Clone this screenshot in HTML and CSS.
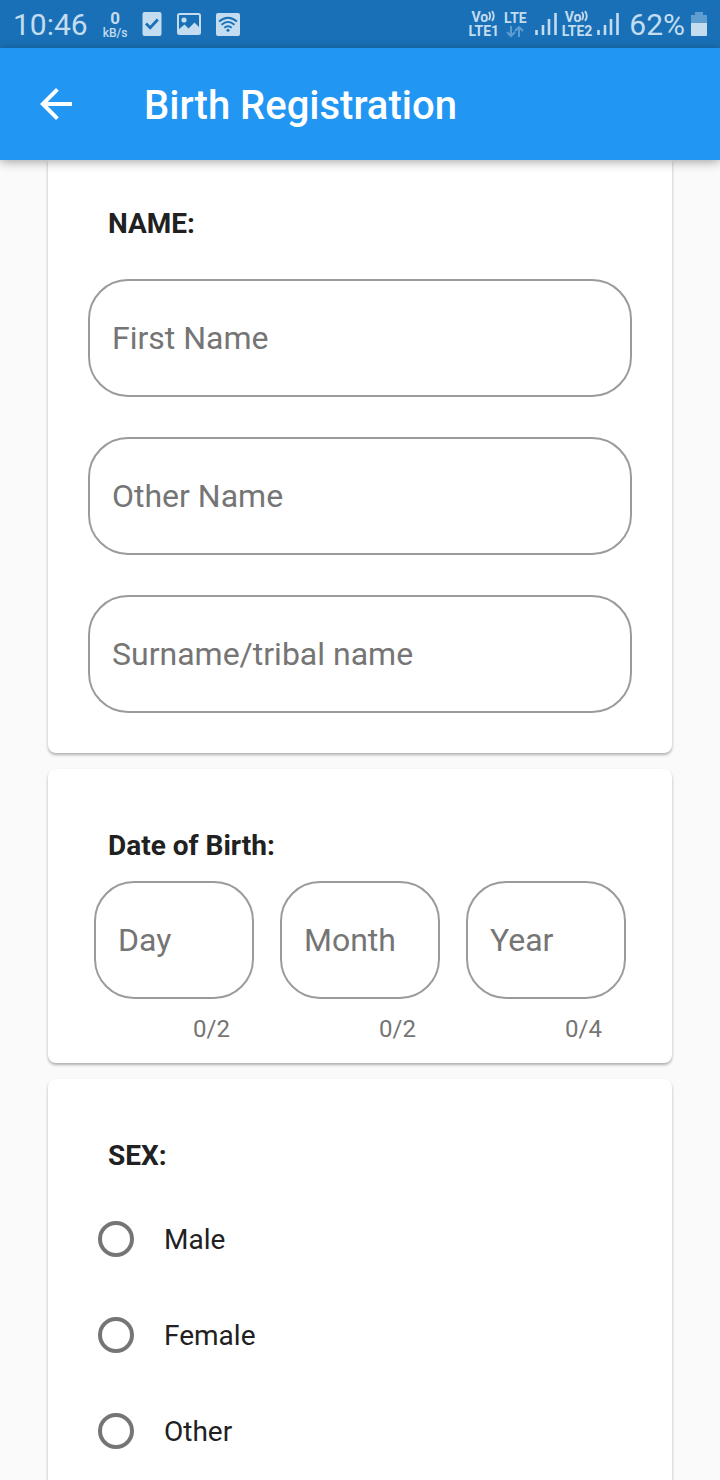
FILE: index.html
```
<!DOCTYPE html>
<html lang="en">
<head>
<meta charset="utf-8">
<meta name="viewport" content="width=device-width, initial-scale=1">
<title>Birth Registration</title>
<link rel="stylesheet" href="styles.css">
</head>
<body>
<div class="app">
  <div class="status">
    <div class="status-group status-left">
      <span class="clock">10:46</span>
      <span class="stack rate"><span class="rate-value">0</span><span class="rate-unit">kB/s</span></span>
      <svg class="notice" width="20" height="24" viewBox="0 0 20 24" aria-hidden="true">
        <rect x="0.5" y="0" width="19" height="24" rx="2" fill="currentColor"/>
        <path d="M4 11.500l4.200 4.200 7.600-8.200" fill="none" stroke="#1970b6" stroke-width="2.800"/>
      </svg>
      <svg class="notice" width="24" height="24" viewBox="0 0 24 24" aria-hidden="true">
        <rect x="1" y="2" width="22" height="20" rx="1.5" fill="none" stroke="currentColor" stroke-width="2"/>
        <circle cx="7" cy="8" r="2.6" fill="currentColor"/>
        <path d="M1 18l6.500-5.500 4 4 6-6L23 16v6H1z" fill="currentColor"/>
      </svg>
      <svg class="notice" width="24" height="24" viewBox="0 0 24 24" aria-hidden="true">
        <rect width="24" height="23" y="1" rx="2" fill="currentColor"/>
        <g fill="none" stroke="#1970b6" stroke-width="1.8">
          <path d="M3 9.500q9-7.500 18 0"/>
          <path d="M5.500 12.700q6.500-5.600 13 0"/>
          <path d="M8.300 15.700q3.700-3 7.400 0"/>
        </g>
        <circle cx="12" cy="18.300" r="1.500" fill="#1970b6"/>
      </svg>
    </div>
    <div class="status-group status-right">
      <div class="status-group sim">
        <span class="stack">
          <span class="volte">Vo<svg width="8" height="12" viewBox="0 0 9 12" aria-hidden="true"><path d="M1 1.500q3 4.500 0 9M4.500 0.500q4 5.500 0 11" fill="none" stroke="currentColor" stroke-width="2"/></svg></span>
          <span>LTE1</span>
        </span>
        <span class="stack"><span>LTE</span>
          <svg width="18" height="12" viewBox="0 0 18 12" aria-hidden="true" class="arrows">
            <path d="M5 0v10M1 6l4 4 4-4M13 11V1M9 5l4-4 4 4" fill="none" stroke="currentColor" stroke-width="2"/>
          </svg>
        </span>
      </div>
      <div class="status-group sim">
        <svg width="22" height="24" viewBox="0 0 22 24" aria-hidden="true">
          <path d="M1.500 18v5M8 13v10M14 7v16M20.500 1v22" stroke="currentColor" stroke-width="2.600"/>
        </svg>
        <span class="stack">
          <span class="volte">Vo<svg width="8" height="12" viewBox="0 0 9 12" aria-hidden="true"><path d="M1 1.500q3 4.500 0 9M4.500 0.500q4 5.500 0 11" fill="none" stroke="currentColor" stroke-width="2"/></svg></span>
          <span>LTE2</span>
        </span>
        <svg width="22" height="24" viewBox="0 0 22 24" aria-hidden="true">
          <path d="M1.500 18v5M8 13v10M14 7v16M20.500 1v22" stroke="currentColor" stroke-width="2.600"/>
        </svg>
      </div>
      <div class="status-group battery">
        <span class="percent">62%</span>
        <svg width="16" height="24" viewBox="0 0 16 24" aria-hidden="true">
          <path d="M4 0h8v3h4v8H0V3h4z" fill="#5f9dd0"/>
          <path d="M0 11h16v12q0 1-1 1H1q-1 0-1-1z" fill="currentColor"/>
        </svg>
      </div>
    </div>
  </div>

  <header class="bar">
    <button class="back" type="button" aria-label="Back">
      <svg width="32" height="32" viewBox="0 0 32 32" aria-hidden="true">
        <path d="M32 14v4H7.700l11.100 11.200L16 32 0 16 16 0l2.800 2.800L7.700 14z" fill="currentColor"/>
      </svg>
    </button>
    <h1 class="title">Birth Registration</h1>
  </header>

  <form class="form">
    <section class="card card-name">
      <h2 class="heading">NAME:</h2>
      <div class="names">
        <input class="field" type="text" placeholder="First Name" aria-label="First Name">
        <input class="field" type="text" placeholder="Other Name" aria-label="Other Name">
        <input class="field" type="text" placeholder="Surname/tribal name" aria-label="Surname/tribal name">
      </div>
    </section>

    <section class="card card-date">
      <h2 class="heading">Date of Birth:</h2>
      <div class="dates">
        <div class="part">
          <input class="field" type="text" placeholder="Day" aria-label="Day" maxlength="2">
          <span class="count">0/2</span>
        </div>
        <div class="part">
          <input class="field" type="text" placeholder="Month" aria-label="Month" maxlength="2">
          <span class="count">0/2</span>
        </div>
        <div class="part">
          <input class="field" type="text" placeholder="Year" aria-label="Year" maxlength="4">
          <span class="count">0/4</span>
        </div>
      </div>
    </section>

    <section class="card card-sex">
      <h2 class="heading">SEX:</h2>
      <label class="option"><input class="radio" type="radio" name="sex" value="male">Male</label>
      <label class="option"><input class="radio" type="radio" name="sex" value="female">Female</label>
      <label class="option"><input class="radio" type="radio" name="sex" value="other">Other</label>
    </section>
  </form>
</div>
</body>
</html>
```
FILE: styles.css
```
* {
  box-sizing: border-box;
}

body {
  margin: 0;
  background: #fafafa;
  color: #212121;
  font-family: Roboto, "Liberation Sans", sans-serif;
}

.app {
  display: flex;
  flex-direction: column;
  min-height: 100vh;
}

.status {
  display: flex;
  justify-content: space-between;
  align-items: center;
  height: 48px;
  padding: 0 13px;
  background: #1970b6;
  color: #c3dcf0;
}

.status-group {
  display: flex;
  align-items: center;
}

.status-left {
  gap: 15px;
}

.status-right {
  gap: 8px;
}

.sim {
  gap: 5px;
}

.battery {
  gap: 6px;
  padding-left: 2px;
}

.clock,
.percent {
  padding-top: 2px;
  font-size: 30px;
  line-height: 46px;
}

.stack {
  display: flex;
  flex-direction: column;
  align-items: center;
  font-size: 14px;
  font-weight: 700;
  line-height: 14px;
}

.volte {
  display: flex;
}

.rate {
  padding-top: 2px;
}

.rate-value {
  font-size: 17px;
  line-height: 17px;
}

.rate-unit {
  font-size: 12px;
  font-weight: 500;
  line-height: 13px;
}

.arrows {
  margin-top: 1px;
  color: #5f9dd0;
}

.bar {
  display: flex;
  align-items: center;
  gap: 56px;
  height: 112px;
  padding: 0 24px;
  background: #2196f3;
  color: #fff;
  box-shadow: 0 2px 10px rgba(0, 0, 0, 0.35);
  z-index: 1;
}

.back {
  display: flex;
  padding: 16px;
  border: 0;
  background: none;
  color: inherit;
}

.title {
  margin: 0;
  padding-top: 2px;
  font-size: 40px;
  font-weight: 500;
}

.form {
  display: flex;
  flex: 1;
  flex-direction: column;
  gap: 16px;
  padding: 0 48px;
}

.card {
  background: #fff;
  border-radius: 8px;
  box-shadow: 0 2px 3px rgba(0, 0, 0, 0.3);
}

.card-name {
  padding: 47px 40px 40px;
  border-radius: 0 0 8px 8px;
}

.card-date {
  padding: 60px 46px 20px;
}

.card-sex {
  flex: 1;
  padding: 60px 50px 0;
  border-radius: 8px 8px 0 0;
}

.heading {
  margin: 0 0 18px;
  font-size: 28px;
  font-weight: 700;
  line-height: 34px;
}

.card-name .heading {
  margin: 0 20px 38px;
}

.card-date .heading {
  margin-left: 14px;
}

.card-sex .heading {
  margin-left: 10px;
}

.names {
  display: grid;
  gap: 40px;
}

.field {
  display: block;
  width: 100%;
  height: 118px;
  padding: 0 22px;
  border: 2px solid #9b9b9b;
  border-radius: 40px;
  background: none;
  color: inherit;
  font-family: inherit;
  font-size: 32px;
}

.field::placeholder {
  color: #757575;
  opacity: 1;
}

.dates {
  display: flex;
  gap: 26px;
}

.part {
  flex: 1;
  min-width: 0;
}

.count {
  display: block;
  margin-top: 16px;
  padding-right: 24px;
  color: #757575;
  font-size: 24px;
  line-height: 28px;
  text-align: right;
}

.option {
  display: flex;
  align-items: center;
  gap: 30px;
  height: 96px;
  font-size: 28px;
}

.radio {
  appearance: none;
  width: 36px;
  height: 36px;
  margin: 0;
  border: 4px solid #757575;
  border-radius: 50%;
}

.radio:checked {
  background: radial-gradient(circle, #2196f3 50%, transparent 54%);
  border-color: #2196f3;
}
```
